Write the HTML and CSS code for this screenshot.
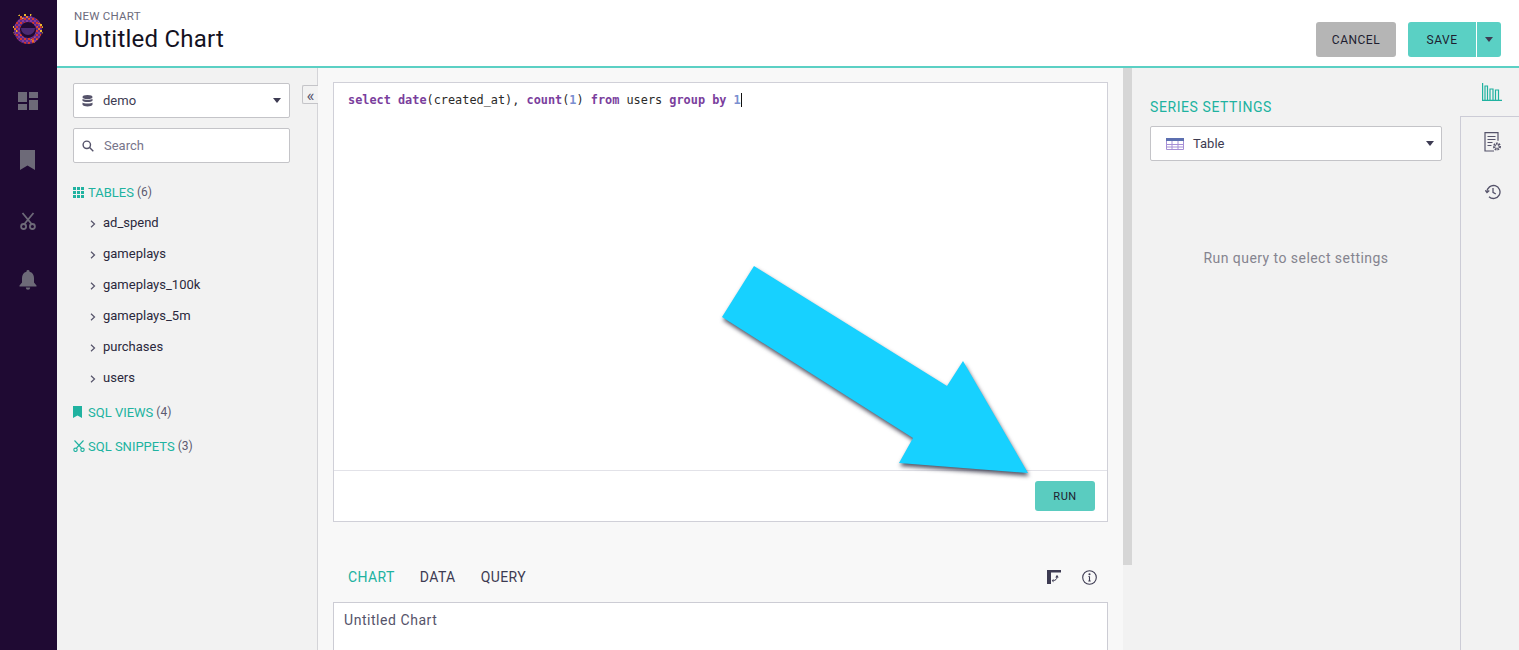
FILE: index.html
```html
<!DOCTYPE html>
<html lang="en">
<head>
<meta charset="utf-8">
<title>New Chart</title>
<link rel="stylesheet" href="styles.css">
</head>
<body>
<div class="app">
  <nav class="nav">
    <svg class="logo" width="32" height="32" viewBox="0 0 32 32">
      <defs>
        <pattern id="px" width="4" height="4" patternUnits="userSpaceOnUse">
          <rect width="4" height="4" fill="#5e2b8c"/>
          <rect width="2" height="2" fill="#d8392f"/>
          <rect x="2" y="2" width="2" height="2" fill="#8a3a9a"/>
        </pattern>
        <pattern id="py" width="6" height="6" patternUnits="userSpaceOnUse">
          <rect x="0" y="0" width="2" height="2" fill="#e8b92c"/>
          <rect x="2" y="2" width="2" height="2" fill="#e8702c"/>
          <rect x="4" y="4" width="2" height="2" fill="#e8b92c"/>
        </pattern>
      </defs>
      <circle cx="16" cy="16" r="11" fill="none" stroke="url(#px)" stroke-width="6"/>
      <path d="M7 4a14 14 0 0 1 12-2" fill="none" stroke="url(#py)" stroke-width="5"/>
      <path d="M27 9a13 13 0 0 1 1 10" fill="none" stroke="url(#py)" stroke-width="5"/>
      <path d="M3 12a13 13 0 0 0 1 8" fill="none" stroke="url(#py)" stroke-width="4"/>
      <path d="M24 25a12 12 0 0 1-6 3" fill="none" stroke="url(#py)" stroke-width="4"/>
      <path d="M9 14h14a7 7 0 0 1-14 0z" fill="#4b2a72"/>
    </svg>
    <svg class="nav-icon dash" width="20" height="18" viewBox="0 0 20 18" fill="#6d6a78"><path d="M0 0h9v10H0zM11 0h9v6h-9zM11 8h9v10h-9zM0 12h9v6H0z"/></svg>
    <svg class="nav-icon mark" width="15" height="20" viewBox="0 0 15 20" fill="#6d6a78"><path d="M0 0h15v20l-7.500-4.500L0 20z"/></svg>
    <svg class="nav-icon cut" width="16" height="18" viewBox="0 0 16 18" fill="none" stroke="#6d6a78" stroke-width="1.800"><path d="M2.500 1l9.500 11.500M13.500 1L4 12.500"/><circle cx="3.600" cy="14.500" r="2.500"/><circle cx="12.400" cy="14.500" r="2.500"/></svg>
    <svg class="nav-icon bell" width="18" height="20" viewBox="0 0 18 20" fill="#6d6a78"><path d="M9 0a1.500 1.500 0 0 1 1.500 1.700C13.500 2.400 15 5 15 8v4.500l2.500 3V16.500H.5v-1l2.500-3V8c0-3 1.500-5.600 4.500-6.300A1.500 1.500 0 0 1 9 0zM6.800 17.500h4.400a2.200 2.200 0 0 1-4.400 0z"/></svg>
  </nav>
  <div class="main">
    <header class="header">
      <div class="titles">
        <div class="eyebrow">NEW CHART</div>
        <h1 class="title">Untitled Chart</h1>
      </div>
      <div class="actions">
        <button class="btn btn-cancel">CANCEL</button>
        <div class="save-group">
          <button class="btn btn-save">SAVE</button>
          <button class="btn btn-caret"><span class="caret"></span></button>
        </div>
      </div>
    </header>
    <div class="workspace">
      <aside class="schema">
        <div class="field select-field">
          <svg class="db-icon" width="11" height="12" viewBox="0 0 11 12" fill="#55536a"><ellipse cx="5.500" cy="2" rx="5" ry="2"/><path d="M.5 3.800c1 1.300 9 1.300 10 0v2c-1 1.600-9 1.600-10 0zM.5 7.600c1 1.300 9 1.300 10 0v2.200c-1 2.200-9 2.200-10 0z"/></svg>
          <span class="field-text">demo</span>
          <span class="caret select-caret"></span>
        </div>
        <div class="field search-field">
          <svg class="search-icon" width="12" height="12" viewBox="0 0 12 12" fill="none" stroke="#55536a" stroke-width="1.400"><circle cx="4.800" cy="4.800" r="3.700"/><path d="M7.600 7.600l3.700 3.700"/></svg>
          <span class="placeholder">Search</span>
        </div>
        <div class="section-row tables-row">
          <svg class="sec-grid" width="11" height="11" viewBox="0 0 11 11" fill="#20b2a0"><path d="M0 0h3v3H0zM4 0h3v3H4zM8 0h3v3H8zM0 4h3v3H0zM4 4h3v3H4zM8 4h3v3H8zM0 8h3v3H0zM4 8h3v3H4zM8 8h3v3H8z"/></svg>
          <span class="section-name">TABLES</span><span class="section-count">(6)</span>
        </div>
        <ul class="table-list">
          <li class="table-item"><svg class="chev" width="6" height="8" viewBox="0 0 6 8" fill="none" stroke="#55536a" stroke-width="1.200"><path d="M1 .8L4.500 4 1 7.200"/></svg>ad_spend</li>
          <li class="table-item"><svg class="chev" width="6" height="8" viewBox="0 0 6 8" fill="none" stroke="#55536a" stroke-width="1.200"><path d="M1 .8L4.500 4 1 7.200"/></svg>gameplays</li>
          <li class="table-item"><svg class="chev" width="6" height="8" viewBox="0 0 6 8" fill="none" stroke="#55536a" stroke-width="1.200"><path d="M1 .8L4.500 4 1 7.200"/></svg>gameplays_100k</li>
          <li class="table-item"><svg class="chev" width="6" height="8" viewBox="0 0 6 8" fill="none" stroke="#55536a" stroke-width="1.200"><path d="M1 .8L4.500 4 1 7.200"/></svg>gameplays_5m</li>
          <li class="table-item"><svg class="chev" width="6" height="8" viewBox="0 0 6 8" fill="none" stroke="#55536a" stroke-width="1.200"><path d="M1 .8L4.500 4 1 7.200"/></svg>purchases</li>
          <li class="table-item"><svg class="chev" width="6" height="8" viewBox="0 0 6 8" fill="none" stroke="#55536a" stroke-width="1.200"><path d="M1 .8L4.500 4 1 7.200"/></svg>users</li>
        </ul>
        <div class="section-row views-row">
          <svg class="sec-mark" width="9" height="12" viewBox="0 0 9 12" fill="#20b2a0"><path d="M0 0h9v12L4.500 9.500 0 12z"/></svg>
          <span class="section-name">SQL VIEWS</span><span class="section-count">(4)</span>
        </div>
        <div class="section-row snippets-row">
          <svg class="sec-cut" width="12" height="12" viewBox="0 0 12 12" fill="none" stroke="#20b2a0" stroke-width="1.100"><path d="M1.500.5l7 7.500M10.500.5l-7 7.500"/><circle cx="2.500" cy="9.800" r="1.700"/><circle cx="9.500" cy="9.800" r="1.700"/></svg>
          <span class="section-name">SQL SNIPPETS</span><span class="section-count">(3)</span>
        </div>
      </aside>
      <button class="collapse">«</button>
      <section class="center">
        <div class="editor">
          <div class="code"><span class="kw">select</span> <span class="kw">date</span>(created_at), <span class="kw">count</span>(<span class="num">1</span>) <span class="kw">from</span> users <span class="kw">group</span> <span class="kw">by</span> <span class="num cursor">1</span></div>
          <div class="editor-foot"><button class="btn btn-run">RUN</button></div>
        </div>
        <div class="tabs">
          <span class="tab active">CHART</span>
          <span class="tab">DATA</span>
          <span class="tab">QUERY</span>
          <span class="tab-icons">
            <svg width="14" height="14" viewBox="0 0 14 14" fill="#3d3b52"><path d="M0 0h14v2.500H0zM0 2.500h4V14H0z"/><path d="M6.500 10.500c2 0 3.500-1.500 3.500-3.500" fill="none" stroke="#3d3b52" stroke-width="1"/><path d="M8.300 7.500L10 4.800l1.700 2.700zM6.500 8.800v3.800L4.800 10.700z"/></svg>
            <svg width="15" height="15" viewBox="0 0 15 15" fill="none" stroke="#3d3b52" stroke-width="1.100"><circle cx="7.500" cy="7.500" r="6.800"/><path d="M7.500 6.500v4.500M6.300 11h2.400M6.500 6.500h1" /><circle cx="7.500" cy="4.300" r=".5"/></svg>
          </span>
        </div>
        <div class="chart-box">Untitled Chart</div>
      </section>
      <div class="scroll-track"><div class="scroll-thumb"></div></div>
      <section class="settings">
        <h2 class="settings-title">SERIES SETTINGS</h2>
        <div class="field type-field">
          <svg class="table-icon" width="18" height="12" viewBox="0 0 18 12"><path d="M0 0h18v3H0z" fill="#5c6fb0"/><path d="M.5 3v8.500h17V3M6 3v8.500M12 3v8.500M.5 6.500h17M.5 9h17" fill="none" stroke="#a68fd6" stroke-width="1"/></svg>
          <span class="field-text">Table</span>
          <span class="caret select-caret"></span>
        </div>
        <p class="settings-empty">Run query to select settings</p>
      </section>
      <div class="side-tabs">
        <div class="side-tab-active">
          <svg width="20" height="18" viewBox="0 0 20 18" fill="none" stroke="#20b2a0" stroke-width="1.200"><path d="M.6 0v17.400H20"/><path d="M3 17V3h2.500v14M8 17V6h3v11M13.500 17V7h3v10"/></svg>
        </div>
        <div class="side-rest">
          <svg width="18" height="20" viewBox="0 0 18 20" fill="none" stroke="#55536a" stroke-width="1.200"><path d="M10 19H1V.7h13v8"/><path d="M3.500 4.500h8M3.500 7.500h8M3.500 10.500h5M3.500 13.500h4"/><circle cx="13" cy="14.500" r="2.700" stroke-width="2.600" stroke-dasharray="1.500 .8"/></svg>
          <svg class="history" width="16" height="16" viewBox="0 0 16 16" fill="none" stroke="#55536a" stroke-width="1.300"><path d="M2 8a6.500 6.500 0 1 1 2 4.700"/><path d="M.3 6.300L2 8.500l2.300-2"/><path d="M8 4v4.300l2.800 1.700"/></svg>
        </div>
      </div>
    </div>
  </div>
</div>
<svg class="arrow" width="320" height="220" viewBox="715 260 320 220"><polygon points="754,266 722,317 913,438 899,463 1028,473 963,361 947,386" /></svg>
</body>
</html>
```

FILE: styles.css
```css
* { box-sizing: border-box; }
html, body { margin: 0; height: 650px; overflow: hidden; }
body { font-family: Roboto, "Noto Sans", sans-serif; color: #3d3b52; background: #fff; }
button { font-family: inherit; border: 0; padding: 0; }
.app { display: flex; height: 650px; }

.nav { width: 57px; flex: none; background: #1f0a33; display: flex; flex-direction: column; align-items: center; padding-right: 2px; }
.logo { margin-top: 14px; }
.nav-icon { flex: none; }
.dash { margin-top: 46px; }
.mark { margin-top: 40px; }
.cut { margin-top: 42px; }
.bell { margin-top: 40px; }

.main { flex: 1; display: flex; flex-direction: column; min-width: 0; }
.header { height: 68px; flex: none; background: #fff; border-bottom: 2px solid #5bd0c4; display: flex; justify-content: space-between; padding: 0 18px 0 17px; }
.titles { padding-top: 10px; }
.eyebrow { font-size: 11.500px; line-height: 13px; color: #6d6b7c; letter-spacing: .25px; }
.title { margin: 2px 0 0; font-size: 24px; line-height: 28px; font-weight: 400; color: #14121f; letter-spacing: .22px; }
.actions { display: flex; gap: 12px; padding-top: 22px; }
.btn { font-size: 12px; letter-spacing: .5px; color: #1e1d30; height: 35px; border-radius: 3px; }
.btn-cancel { width: 80px; background: #b5b5b5; }
.save-group { display: flex; gap: 1px; }
.btn-save { width: 68px; background: #5ad0c4; border-radius: 3px 0 0 3px; }
.btn-caret { width: 24px; background: #5ad0c4; border-radius: 0 3px 3px 0; display: flex; align-items: center; justify-content: center; }
.caret { display: block; width: 0; height: 0; border-left: 4px solid transparent; border-right: 4px solid transparent; border-top: 5px solid #3d3b52; }

.workspace { flex: 1; display: flex; min-height: 0; position: relative; }
.schema { width: 261px; flex: none; background: #f2f2f2; border-right: 1px solid #d4d4d8; padding: 15px 27px 0 16px; }
.field { background: #fff; border: 1px solid #c4c4c8; border-radius: 2px; height: 35px; display: flex; align-items: center; font-size: 13px; }
.select-field { padding: 0 8px; }
.db-icon { margin-right: 10px; }
.field-text { flex: 1; color: #3d3b52; }
.select-caret { flex: none; }
.search-field { margin-top: 10px; padding-left: 8px; }
.search-icon { margin-right: 10px; }
.placeholder { color: #77758a; }
.section-row { display: flex; align-items: center; font-size: 13px; height: 16px; }
.sec-grid { flex: none; margin-right: 4px; }
.sec-mark { flex: none; margin-right: 6px; }
.sec-cut { flex: none; margin-right: 3px; }
.section-name { color: #20b2a0; margin-right: 3px; }
.section-count { color: #5c5a70; font-size: 12px; }
.tables-row { margin-top: 21px; }
.table-list { list-style: none; margin: 7px 0 0; padding: 0; }
.table-item { height: 31px; line-height: 31px; font-size: 13px; color: #2a283c; display: flex; align-items: center; padding-left: 17px; }
.chev { margin-right: 7px; margin-top: 3px; }
.views-row { margin-top: 11px; }
.snippets-row { margin-top: 18px; }

.collapse { position: absolute; left: 245px; top: 17px; width: 16px; height: 19px; background: #f2f2f2; border: 1px solid #c4c4c8; border-right: 0; border-radius: 2px 0 0 2px; color: #55536a; font-size: 17px; line-height: 14px; }

.center { width: 805px; flex: none; background: #f8f8f8; padding: 14px 15px 0 15px; display: flex; flex-direction: column; overflow: hidden; }
.editor { height: 440px; flex: none; background: #fff; border: 1px solid #d0d0d8; display: flex; flex-direction: column; }
.code { flex: 1; padding: 9px 14px; font-family: "DejaVu Sans Mono", monospace; font-size: 11.860px; line-height: 16px; color: #2a2a2a; }
.kw { color: #7a3e9d; font-weight: 700; }
.num { color: #7a8fd0; font-weight: 700; }
.cursor { border-right: 1px solid #111; }
.editor-foot { height: 51px; flex: none; border-top: 1px solid #e2e2e8; display: flex; justify-content: flex-end; padding: 10px 12px 0 0; }
.btn-run { width: 60px; height: 30px; background: #5accc0; font-size: 11px; }
.tabs { height: 16px; margin-top: 47px; display: flex; align-items: center; font-size: 14px; letter-spacing: .4px; padding: 0 11px 0 15px; flex: none; color: #3d3b52; }
.tab { margin-right: 25px; }
.tab.active { color: #20b2a0; }
.tab-icons { margin-left: auto; display: flex; gap: 21px; align-items: center; }
.chart-box { margin-top: 17px; flex: 1; background: #fff; border: 1px solid #ccccd4; border-bottom: 0; padding: 8px 10px; font-size: 14px; line-height: 18px; letter-spacing: .55px; color: #55536a; }

.scroll-track { width: 9px; flex: none; background: #f2f2f2; }
.scroll-thumb { height: 497px; background: #d6d6d6; }

.settings { width: 328px; flex: none; background: #f2f2f2; padding: 30px 18px 0 18px; }
.settings-title { margin: 0 0 10px; font-size: 14px; line-height: 18px; font-weight: 400; letter-spacing: .58px; color: #20b2a0; }
.type-field { width: 292px; padding: 0 7px 0 15px; }
.table-icon { margin-right: 9px; }
.settings-empty { margin: 88px 0 0; width: 292px; text-align: center; font-size: 14px; line-height: 18px; letter-spacing: .45px; color: #85848f; }

.side-tabs { flex: 1; background: #f2f2f2; display: flex; flex-direction: column; }
.side-tab-active { height: 48px; flex: none; padding: 15px 0 0 22px; }
.side-rest { flex: 1; border-left: 1px solid #ccccd6; border-top: 1px solid #ccccd6; display: flex; flex-direction: column; align-items: center; padding: 15px 0 0 6px; }
.history { margin-top: 32px; }

.arrow { position: absolute; left: 715px; top: 260px; overflow: visible; filter: drop-shadow(1px 3px 2px rgba(40, 40, 60, .8)); }
.arrow polygon { fill: #17d1ff; }
```
